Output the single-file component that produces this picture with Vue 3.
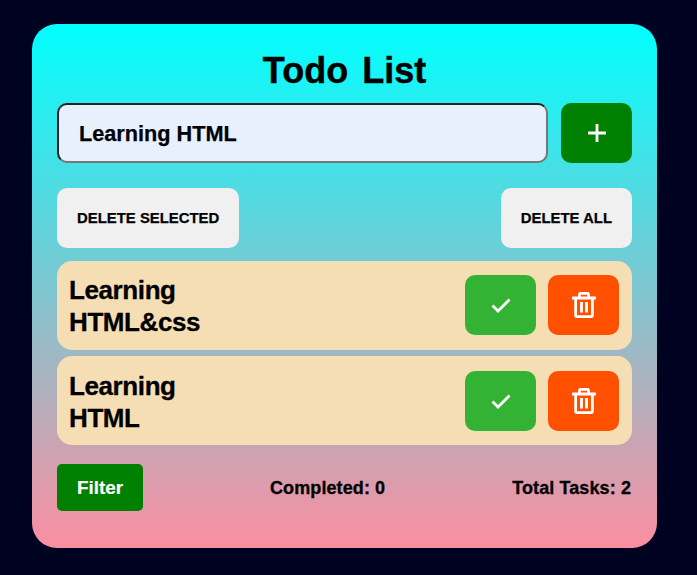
<script setup>
const tasks = ['Learning HTML&css', 'Learning HTML']
</script>

<template>
  <main class="page">
    <section class="card">
      <h1 class="title">Todo List</h1>
      <div class="add-row">
        <input class="task-input" value="Learning HTML" />
        <button class="add-btn" aria-label="Add">
          <svg width="20" height="20" viewBox="0 0 20 20"><path d="M10 1v18M1 10h18" stroke="#fff" stroke-width="2.8" fill="none" /></svg>
        </button>
      </div>
      <div class="bulk-row">
        <button class="bulk-btn">DELETE SELECTED</button>
        <button class="bulk-btn">DELETE ALL</button>
      </div>
      <ul class="list">
        <li v-for="task in tasks" :key="task" class="item">
          <span class="item-text">{{ task }}</span>
          <div class="actions">
            <button class="icon-btn done" aria-label="Complete">
              <svg width="20" height="16" viewBox="0 0 20 16"><path d="M1.5 8.5 7 14 18.5 2.5" stroke="#fff" stroke-width="2.8" fill="none" /></svg>
            </button>
            <button class="icon-btn remove" aria-label="Delete">
              <svg width="24" height="26" viewBox="0 0 24 26" fill="none" stroke="#fff" stroke-width="2.8">
                <path d="M0 6h24M7.5 6V2.4q0-1.1 1.1-1.1h6.8q1.1 0 1.1 1.1V6M3.6 6v17.2q0 1.5 1.5 1.5h13.8q1.5 0 1.5-1.5V6M9.5 10v10.500M14.500 10v10.500" />
              </svg>
            </button>
          </div>
        </li>
      </ul>
      <footer class="footer">
        <button class="filter-btn">Filter</button>
        <span class="stat">Completed: 0</span>
        <span class="stat">Total Tasks: 2</span>
      </footer>
    </section>
  </main>
</template>

<style>
html, body { margin: 0; background: #000222; }
</style>

<style scoped>
.page {
  box-sizing: border-box;
  height: 575px;
  padding: 24px 40px 27px 32px;
  background: #000222;
  font-family: "Liberation Sans", Arial, sans-serif;
  color: #000;
}
.card {
  box-sizing: border-box;
  height: 524px;
  padding: 25px 25px 0;
  border-radius: 25px;
  background: linear-gradient(#00ffff, #fb8ea1);
}
.title {
  margin: 0;
  height: 54px;
  font-size: 36px;
  line-height: 44px;
  font-weight: 700;
  text-align: center;
  word-spacing: 4px;
  -webkit-text-stroke: 0.4px #000;
}
.add-row { display: flex; gap: 13px; }
.task-input {
  box-sizing: border-box;
  flex: 0 0 491px;
  height: 60px;
  padding: 2px 20px 0;
  border: 2px inset #767676;
  border-radius: 10px;
  background: #e8f0fe;
  font: 700 21.7px "Liberation Sans", Arial, sans-serif;
  -webkit-text-stroke: 0.25px #000;
  color: #000;
}
.add-btn {
  display: flex;
  align-items: center;
  justify-content: center;
  width: 71px;
  height: 60px;
  padding: 0;
  border: 0;
  border-radius: 10px;
  background: #008000;
}
.bulk-row {
  display: flex;
  justify-content: space-between;
  width: 575px;
  margin-top: 25px;
}
.bulk-btn {
  height: 60px;
  padding: 0 20px;
  border: 0;
  border-radius: 10px;
  background: #f0f0f0;
  font: 700 14.9px "Liberation Sans", Arial, sans-serif;
  -webkit-text-stroke: 0.25px #000;
  color: #000;
}
.list {
  display: flex;
  flex-direction: column;
  gap: 6.3px;
  width: 575px;
  margin: 12.8px 0 0;
  padding: 0;
  list-style: none;
}
.item {
  box-sizing: border-box;
  display: flex;
  align-items: center;
  justify-content: space-between;
  height: 89px;
  padding: 0 13px 0 12px;
  border-radius: 15px;
  background: #f5deb3;
}
.item-text {
  width: 170px;
  padding-top: 2px;
  font-size: 26px;
  line-height: 32px;
  font-weight: 700;
  letter-spacing: -0.4px;
  -webkit-text-stroke: 0.3px #000;
}
.actions { display: flex; gap: 12px; }
.icon-btn {
  display: flex;
  align-items: center;
  justify-content: center;
  width: 71px;
  height: 60px;
  padding: 0;
  border: 0;
  border-radius: 10px;
}
.done { background: #33b233; }
.remove { background: #ff5000; }
.footer {
  display: flex;
  align-items: center;
  justify-content: space-between;
  width: 574px;
  margin-top: 18.9px;
}
.filter-btn {
  width: 86px;
  height: 47px;
  padding: 1px 0 0;
  border: 0;
  border-radius: 5px;
  background: #008000;
  color: #fff;
  font: 700 18.800px "Liberation Sans", Arial, sans-serif;
  -webkit-text-stroke: 0.2px #fff;
}
.stat {
  padding-top: 3px;
  font-size: 18px;
  font-weight: 700;
  letter-spacing: 0.1px;
  -webkit-text-stroke: 0.3px #000;
}
</style>
